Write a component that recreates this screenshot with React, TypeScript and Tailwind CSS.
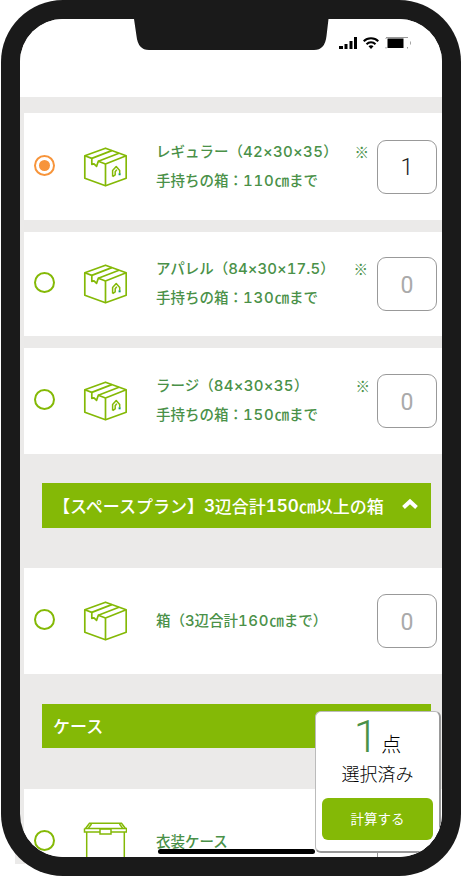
import clsx from 'clsx';

type Item = {
  lines: [string, string, string][];
  count: number;
  selected?: boolean;
  rowClass: string;
  textClass?: string;
  noteClass: string;
};

const items: Item[] = [
  {
    lines: [
      ['レギュラー（', '42×30×35', '）'],
      ['手持ちの箱：', '110', '㎝まで'],
    ],
    count: 1,
    selected: true,
    rowClass: 'mt-4 h-[107px]',
    textClass: 'pb-px',
    noteClass: 'top-[25px] right-[73px]',
  },
  {
    lines: [
      ['アパレル（', '84×30×17.5', '）'],
      ['手持ちの箱：', '130', '㎝まで'],
    ],
    count: 0,
    rowClass: 'mt-3 h-[104px]',
    textClass: 'pb-[3px]',
    noteClass: 'top-[23px] right-[74px]',
  },
  {
    lines: [
      ['ラージ（', '84×30×35', '）'],
      ['手持ちの箱：', '150', '㎝まで'],
    ],
    count: 0,
    rowClass: 'mt-3 h-[106px]',
    textClass: 'pb-[3px]',
    noteClass: 'top-[24px] right-[72px]',
  },
];

function BoxIcon({ marked }: { marked?: boolean }) {
  return (
    <svg className="h-10 w-11 shrink-0" viewBox="0 0 44 40" fill="none" stroke="#84b906" strokeWidth="1.7" strokeLinejoin="round">
      <path d="M22.5 1.2 43.2 8.8V31.2L22.5 38.8 1.8 31.2V8.8Z" />
      <path d="M22.5 38.8V17L43.2 8.8" />
      <path d="M1.8 8.8 8.8 11.4V17.3L11 16.8 13.6 19.3 15.3 14.2 22.5 17" />
      <path d="M8.8 11.4 28.8 3.6M15.3 14.2 36 6.2" />
      {marked && (
        <>
          <path d="M29.6 29.6V23.6L33.2 19.6 36.7 23.6V26.5M29.6 29.6 32.2 27.8V24.8L33.8 22.6" strokeWidth="1.5" />
          <path d="M35.6 26.3h2v2h-2z" fill="#149b6b" stroke="none" />
        </>
      )}
    </svg>
  );
}

function CaseIcon() {
  return (
    <svg className="h-10 w-11 shrink-0" viewBox="0 0 44 40" fill="none" stroke="#84b906" strokeWidth="1.5">
      <path d="M2.5 6.5 6.5 1.2H38.5L42.5 6.5M1.500 6.500H43.500V10H28M17 10H1.500V6.500" />
      <path d="M3.700 10V40M41.300 10V40M17 7h11v5h-11zM5.500 6 8.500 2M39.500 6 36.500 2" />
    </svg>
  );
}

function Radio({ selected }: { selected?: boolean }) {
  return (
    <span
      className={clsx(
        'mb-[3px] flex size-[21px] shrink-0 items-center justify-center rounded-full border-2',
        selected ? 'border-[#f7943a]' : 'border-[#84b906]',
      )}
    >
      {selected && <span className="size-[11px] rounded-full bg-[#f7943a]" />}
    </span>
  );
}

function Count({ value }: { value?: number }) {
  return (
    <span
      className={clsx(
        'mr-[5px] ml-auto flex h-[54px] w-[60px] shrink-0 items-center justify-center rounded-[9px] border border-[#999] pt-[3px] font-[Roboto] text-[23px]',
        value ? 'font-light text-[#222]' : 'font-normal text-[#aaa]',
      )}
    >
      {value}
    </span>
  );
}

function Line({ parts }: { parts: [string, string, string] }) {
  const digits = parts[1];
  return (
    <div className="flex items-baseline">
      <span>{parts[0]}</span>
      <span
        className={clsx(
          'font-[Inter] text-[15px] tabular-nums',
          digits.length === 3 && 'tracking-[0.8px]',
          digits.length === 8 && 'tracking-[0.3px]',
          digits.length > 8 && 'tracking-[0.05px]',
        )}
      >
        {digits}
      </span>
      <span>{parts[2]}</span>
    </div>
  );
}

function StatusIcons() {
  return (
    <div className="flex items-center gap-[6px] pt-[18px] pl-[319px]">
      <svg className="h-3 w-[18px]" viewBox="0 0 18 12">
        <path d="M0 9h4v3H0zM5.500 7h3v5h-3zM10.500 4h3v8h-3zM15 0h3v12h-3z" />
      </svg>
      <svg className="h-3 w-4" viewBox="0 0 16 12" fill="none" stroke="#000" strokeWidth="2">
        <path d="M.7 4.2C4.5.2 11.5.2 15.3 4.2M3.5 7.2c2.5-2.6 6.500-2.600 9 0" />
        <path d="M8 12 5.500 9.200C7 7.800 9 7.800 10.500 9.200Z" fill="#000" stroke="none" />
      </svg>
      <svg className="h-3 w-[26px]" viewBox="0 0 26 12">
        <path d="M1 .5H23M1 2V1M1 10V11.500M22.500 10v1.500" fill="none" stroke="#999" />
        <rect x="2.500" y="1.500" width="16" height="9.500" />
        <path d="M25 4c1.300.8 1.300 3.200 0 4z" fill="#999" />
      </svg>
    </div>
  );
}

export default function App() {
  return (
    <div className="relative h-[876px] w-[461px] overflow-hidden bg-white pl-px font-['Noto_Sans_CJK_JP',sans-serif]">
      <div className="absolute top-[850px] left-[15px] h-[14px] w-[10px] bg-[#ebeae9]" />
      <div className="relative h-[876px] w-[460px] overflow-hidden rounded-[62px] bg-[#1a1a1a] px-[19px] pt-[19px]">
        <div className="relative h-[838px] w-[422px] overflow-hidden rounded-[43px] bg-[#ebeae9]">
          <header className="relative h-[78px] bg-white">
            <svg className="absolute top-0 left-[114px] h-[31px] w-[195px]" viewBox="0 0 195 31">
              <path d="M0 0H194.500L192.500 17Q191 31 180 31H15Q4 31 2.500 17Z" fill="#1a1a1a" />
            </svg>
            <StatusIcons />
          </header>

          <main className="pl-1 text-[14.5px] leading-[28px] font-medium text-[#4a9148]">
            {items.map((item) => (
              <section key={item.lines[0][0]} className={clsx('relative flex items-center bg-white pl-[10px]', item.rowClass)}>
                <Radio selected={item.selected} />
                <div className="ml-[28px]">
                  <BoxIcon marked />
                </div>
                <div className={clsx('ml-[29px] whitespace-nowrap', item.textClass)}>
                  {item.lines.map((parts) => (
                    <Line key={parts[0]} parts={parts} />
                  ))}
                </div>
                <span className={clsx('absolute', item.noteClass)}>※</span>
                <Count value={item.count} />
              </section>
            ))}

            <div className="mt-[29px] ml-[18px] flex h-[45px] w-[389px] items-center bg-[#84b906] pl-[11px] text-[17px] whitespace-nowrap text-white">
              <span>【スペースプラン】</span>
              <span className="font-[Inter] font-semibold">3</span>
              <span>辺合計</span>
              <span className="font-[Inter] font-semibold tabular-nums">150</span>
              <span>㎝以上の箱</span>
              <svg className="mr-[13px] mb-1 ml-auto h-3 w-4" viewBox="0 0 16 12" fill="none" stroke="#fff" strokeWidth="4">
                <path d="M1.500 9.500 8 3.500 14.500 9.500" />
              </svg>
            </div>

            <section className="mt-10 flex h-[106px] items-center bg-white pl-[10px]">
              <Radio />
              <div className="ml-[28px]">
                <BoxIcon />
              </div>
              <div className="ml-[29px] flex items-baseline pb-px whitespace-nowrap">
                <span>箱（</span>
                <span className="font-[Inter] text-[15px]">3</span>
                <span>辺合計</span>
                <span className="font-[Inter] text-[15px] tracking-[0.7px] tabular-nums">160</span>
                <span>㎝まで）</span>
              </div>
              <Count value={0} />
            </section>

            <div className="mt-[30px] ml-[18px] flex h-11 w-[389px] items-center bg-[#84b906] pl-[11px] text-[17px] text-white">
              ケース
            </div>

            <section className="mt-[41px] flex h-[106px] items-center bg-white pl-[10px]">
              <Radio />
              <div className="ml-[28px]">
                <CaseIcon />
              </div>
              <span className="ml-[29px] pb-[2px]">衣装ケース</span>
              <Count />
            </section>
          </main>

          <div className="absolute bottom-[3px] left-[138px] h-[5px] w-[157px] rounded-full bg-black" />

          <aside className="absolute top-[692px] left-[295px] flex h-[142px] w-[126px] flex-col items-center rounded-md border-t border-r-2 border-b-2 border-l border-[#999] border-t-[#bbb] border-l-[#bbb] bg-white font-light text-black">
            <div className="flex h-[47px] items-baseline gap-[3px]">
              <span className="font-[Roboto] text-[44px] leading-[50px] text-[#4a9148]">1</span>
              <span className="text-[20px]">点</span>
            </div>
            <div className="text-[18px] leading-[28px]">選択済み</div>
            <button className="mt-[11px] h-[42px] w-[111px] rounded-md bg-[#84b906] pb-px text-[13.5px] font-normal text-white">計算する</button>
          </aside>
        </div>
      </div>
    </div>
  );
}
